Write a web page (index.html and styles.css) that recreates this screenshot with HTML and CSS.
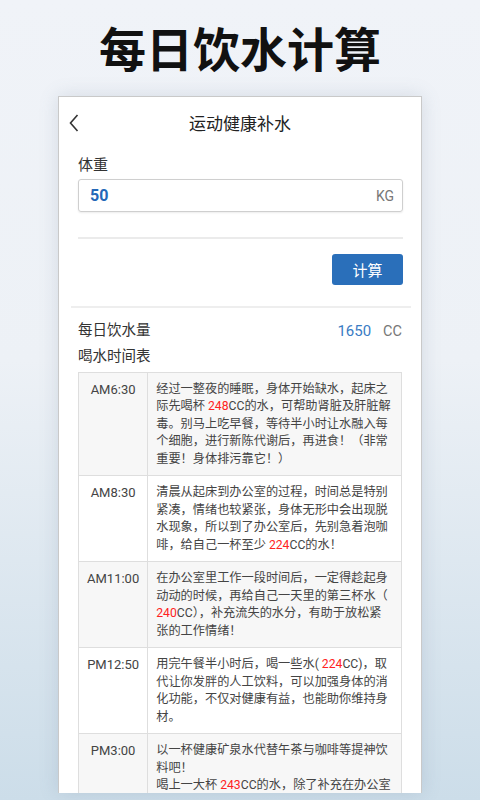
FILE: index.html
```html
<!DOCTYPE html>
<html lang="zh-CN">
<head>
    <meta charset="UTF-8">
    <meta name="viewport" content="width=device-width, initial-scale=1.0">
    <title>每日饮水计算</title>
    <link rel="stylesheet" href="styles.css">
</head>
<body>

<h1 class="page-title">每日饮水计算</h1>

<div class="screen">
    <!-- 顶部导航 -->
    <div class="nav">
        <svg class="back" width="10" height="18" viewBox="0 0 10 18">
            <polyline points="8.5,1 1.5,9 8.5,17" fill="none" stroke="#333" stroke-width="1.6"/>
        </svg>
        <span class="nav-title">运动健康补水</span>
    </div>

    <div class="form">
        <label class="label">体重</label>
        <div class="field">
            <span class="field-value">50</span>
            <span class="field-unit">KG</span>
        </div>
        <div class="line"></div>
        <div class="actions">
            <button class="btn">计算</button>
        </div>
    </div>

    <div class="line line-wide"></div>

    <div class="result">
        <div class="result-row">
            <span>每日饮水量</span>
            <span><span class="amount">1650</span><span class="unit">CC</span></span>
        </div>
        <div class="result-row">喝水时间表</div>

        <table class="schedule">
            <tr>
                <td class="time">AM6:30</td>
                <td class="desc">经过一整夜的睡眠，身体开始缺水，起床之际先喝杯 <em>248</em>CC的水，可帮助肾脏及肝脏解毒。别马上吃早餐，等待半小时让水融入每个细胞，进行新陈代谢后，再进食！（非常重要！身体排污靠它！）</td>
            </tr>
            <tr>
                <td class="time">AM8:30</td>
                <td class="desc">清晨从起床到办公室的过程，时间总是特别紧凑，情绪也较紧张，身体无形中会出现脱水现象，所以到了办公室后，先别急着泡咖啡，给自己一杯至少 <em>224</em>CC的水！</td>
            </tr>
            <tr>
                <td class="time">AM11:00</td>
                <td class="desc">在办公室里工作一段时间后，一定得趁起身动动的时候，再给自己一天里的第三杯水（<em>240</em>CC），补充流失的水分，有助于放松紧张的工作情绪！</td>
            </tr>
            <tr>
                <td class="time">PM12:50</td>
                <td class="desc">用完午餐半小时后，喝一些水( <em>224</em>CC)，取代让你发胖的人工饮料，可以加强身体的消化功能，不仅对健康有益，也能助你维持身材。</td>
            </tr>
            <tr>
                <td class="time">PM3:00</td>
                <td class="desc">以一杯健康矿泉水代替午茶与咖啡等提神饮料吧！<br>喝上一大杯 <em>243</em>CC的水，除了补充在办公室里流失的水分之外，还能帮助头脑清醒。</td>
            </tr>
        </table>
    </div>
</div>

</body>
</html>
```

FILE: styles.css
```css
html, body {
    margin: 0;
    padding: 0;
}
body {
    height: 800px;
    overflow: hidden;
    font-family: Roboto, "Noto Sans CJK SC", sans-serif;
    color: #333;
    background: linear-gradient(180deg, #f0f3f8 0%, #edf1f6 45%, #ccdde9 100%);
}
.page-title {
    margin: 0;
    height: 96px;
    line-height: 94px;
    text-align: center;
    font-family: "Noto Sans CJK SC", sans-serif;
    font-size: 47px;
    font-weight: 700;
    color: #111;
}
.screen {
    width: 364px;
    height: 697px;
    margin: 0 auto;
    background: #fff;
    border: 1px solid #c9c9c9;
    border-bottom: none;
    box-shadow: 0 0 18px rgba(90, 110, 140, 0.18);
    overflow: hidden;
    box-sizing: border-box;
}
/* 导航 */
.nav {
    position: relative;
    height: 51px;
    display: flex;
    align-items: center;
    justify-content: center;
}
.back {
    position: absolute;
    left: 10px;
    top: 17px;
}
.nav-title {
    font-family: "Noto Sans CJK SC", sans-serif;
    font-size: 17px;
    color: #222;
}
.form {
    padding: 0 18px 0 19px;
}
.label {
    display: block;
    margin-top: 7px;
    font-size: 15px;
    line-height: 20px;
    color: #333;
}
.field {
    margin-top: 4px;
    height: 33px;
    border: 1px solid #cfcfcf;
    border-radius: 3px;
    box-shadow: 0 1px 2px rgba(0, 0, 0, 0.08);
    display: flex;
    align-items: center;
    justify-content: space-between;
    padding: 0 8px 0 11px;
    box-sizing: border-box;
}
.field-value {
    font-size: 16px;
    font-weight: 700;
    color: #2468b8;
}
.field-unit {
    font-size: 14px;
    color: #777;
}
.line {
    height: 1.5px;
    background: #ebebeb;
    margin-top: 25px;
}
.actions {
    display: flex;
    justify-content: flex-end;
    margin-top: 15px;
}
.btn {
    width: 71px;
    height: 31px;
    border: none;
    border-radius: 3px;
    background: #2a6fba;
    color: #fff;
    font-family: "Noto Sans CJK SC", sans-serif;
    font-size: 15px;
    padding: 0;
}
.line-wide {
    height: 2px;
    margin: 21px 10px 0 12px;
    background: #eeeeee;
}
.result {
    padding: 0 19px 0 19px;
}
.result-row {
    display: flex;
    justify-content: space-between;
    font-size: 14.5px;
    line-height: 20px;
    margin-top: 5px;
}
.result-row:first-child {
    margin-top: 13px;
}
.amount {
    color: #3a7cc4;
    font-size: 15px;
    margin-right: 12px;
}
.unit {
    color: #777;
    font-size: 14.5px;
}
.schedule {
    width: 100%;
    margin-top: 5px;
    border-collapse: collapse;
    font-size: 12.2px;
    line-height: 17.5px;
}
.schedule td {
    border: 1px solid #dedede;
    vertical-align: top;
    padding: 8px 8px 7px;
}
.schedule tr:nth-child(odd) {
    background: #f7f7f7;
}
.time {
    width: 51px;
    text-align: center;
    color: #444;
    font-size: 13px;
    white-space: nowrap;
}
.desc {
    color: #444;
    line-break: anywhere;
}
.desc em {
    font-style: normal;
    color: #f22;
}
```
